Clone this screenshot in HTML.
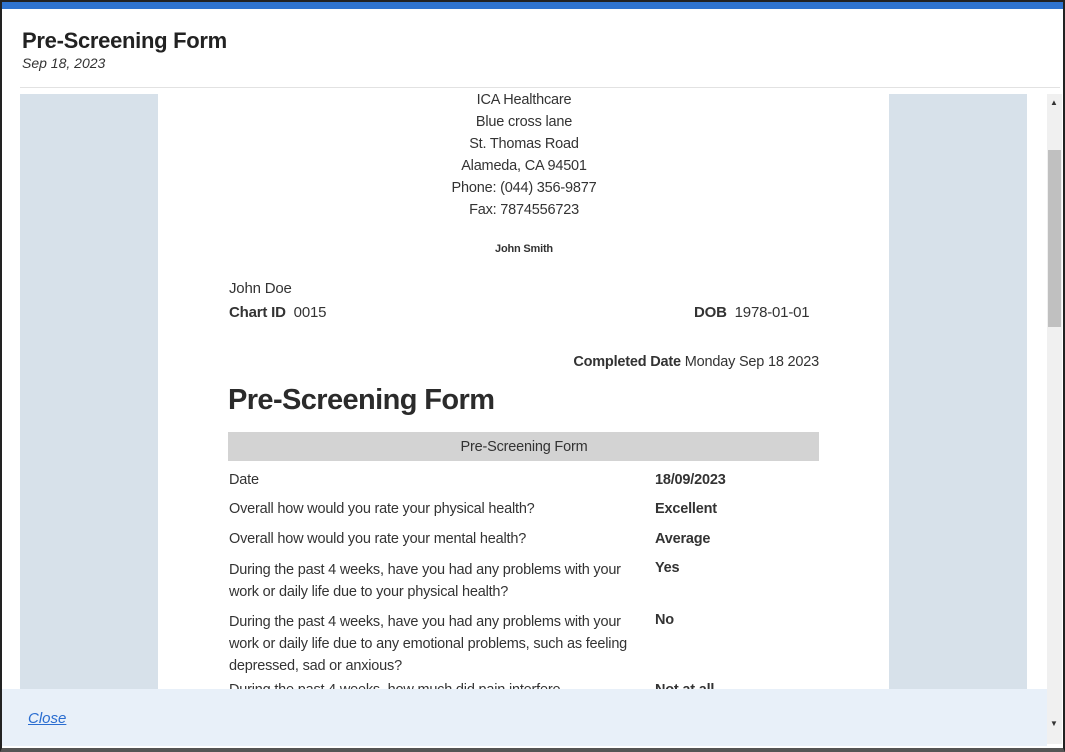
<!DOCTYPE html>
<html><head><style>
*{margin:0;padding:0;box-sizing:border-box}
body{width:1065px;height:752px;overflow:hidden;background:#fff;font-family:"Liberation Sans",sans-serif;color:#333;position:relative}
.frame{position:absolute;left:0;top:0;width:1065px;height:752px;border:2px solid #222;border-bottom:4px solid #555}
.top{position:absolute;left:0;top:0;width:1065px;height:9px;background:#2f74d0;border-top:2px solid #222}
.hdr h1{position:absolute;left:22px;top:28px;font-size:22px;font-weight:bold;color:#222;letter-spacing:-0.3px}
.hdr i{position:absolute;left:22px;top:55px;font-size:14px;color:#333}
.line{position:absolute;left:20px;top:87px;width:1040px;height:1px;background:#e2e2e2}
.gl{position:absolute;top:94px;height:600px;background:#d7e1ea}
.t{position:absolute;font-size:14.5px;white-space:nowrap;letter-spacing:-0.2px}
.c{left:324px;width:400px;text-align:center}
b{font-weight:bold}
.sb{position:absolute;left:1047px;top:94px;width:15px;height:650px;background:#f0f0f0}
.thumb{position:absolute;left:1048px;top:150px;width:13px;height:177px;background:#c0c0c0}
.foot{position:absolute;left:2px;top:689px;width:1045px;height:57px;background:#e8f0f9}
.foot a{position:absolute;left:26px;top:21px;font-size:15px;font-style:italic;color:#2a6dd0;text-decoration:underline}
</style></head><body>
<div class="hdr"><h1>Pre-Screening Form</h1><i>Sep 18, 2023</i></div>
<div class="line"></div>
<div class="gl" style="left:20px;width:138px"></div>
<div class="gl" style="left:889px;width:138px"></div>
<div class="t c" style="top:92px">ICA Healthcare</div>
<div class="t c" style="top:114px">Blue cross lane</div>
<div class="t c" style="top:136px">St. Thomas Road</div>
<div class="t c" style="top:158px">Alameda, CA 94501</div>
<div class="t c" style="top:180px">Phone: (044) 356-9877</div>
<div class="t c" style="top:202px">Fax: 7874556723</div>
<div class="t c" style="top:243px;font-size:11px;font-weight:bold">John Smith</div>
<div class="t" style="left:229px;top:280px;font-size:15px">John Doe</div>
<div class="t" style="left:229px;top:304px;font-size:15px"><b>Chart ID</b>&nbsp; 0015</div>
<div class="t" style="left:694px;top:304px;font-size:15px"><b>DOB</b>&nbsp; 1978-01-01</div>
<div class="t" style="right:246px;top:354px"><b>Completed Date</b> Monday Sep 18 2023</div>
<div class="t" style="left:228px;top:384px;font-size:29px;font-weight:bold;letter-spacing:-0.6px;color:#2b2b2b">Pre-Screening Form</div>
<div style="position:absolute;left:228px;top:432px;width:591px;height:29px;background:#d3d3d3"></div>
<div class="t c" style="top:439px">Pre-Screening Form</div>
<div class="t" style="left:229px;top:472px">Date</div><div class="t" style="left:655px;top:472px"><b>18/09/2023</b></div>
<div class="t" style="left:229px;top:501px">Overall how would you rate your physical health?</div><div class="t" style="left:655px;top:501px"><b>Excellent</b></div>
<div class="t" style="left:229px;top:531px">Overall how would you rate your mental health?</div><div class="t" style="left:655px;top:531px"><b>Average</b></div>
<div class="t" style="left:229px;top:559px;line-height:22px">During the past 4 weeks, have you had any problems with your<br>work or daily life due to your physical health?</div><div class="t" style="left:655px;top:560px"><b>Yes</b></div>
<div class="t" style="left:229px;top:611px;line-height:22px">During the past 4 weeks, have you had any problems with your<br>work or daily life due to any emotional problems, such as feeling<br>depressed, sad or anxious?</div><div class="t" style="left:655px;top:612px"><b>No</b></div>
<div class="t" style="left:229px;top:682px">During the past 4 weeks, how much did pain interfere</div><div class="t" style="left:655px;top:682px"><b>Not at all</b></div>
<div class="sb"></div><div class="thumb"></div>
<div style="position:absolute;left:1050px;top:98px;font-size:8px;color:#333">▲</div>
<div style="position:absolute;left:1050px;top:719px;font-size:8px;color:#333">▼</div>
<div class="foot"><a>Close</a></div>
<div class="top"></div>
<div class="frame"></div>
</body></html>
